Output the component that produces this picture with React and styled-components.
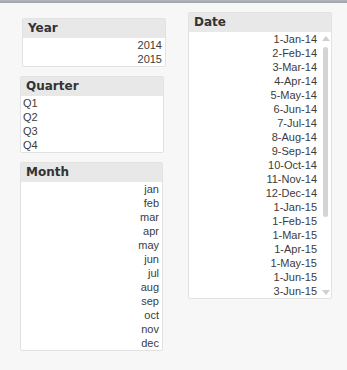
import styled, { createGlobalStyle } from "styled-components";

const GlobalStyle = createGlobalStyle`
  html, body {
    margin: 0;
    padding: 0;
    background: #f7f7f7;
  }
  body {
    font-family: "Liberation Sans", Arial, sans-serif;
  }
`

const TopBar = styled.div`
  height: 3px;
  background: linear-gradient(#b4b8bc, #9ea2a6);
`

const Page = styled.div`
  display: flex;
  align-items: flex-start;
  gap: 22px;
  padding-left: 20px;
`

const Column = styled.div`
  display: flex;
  flex-direction: column;
  gap: 9px;
  padding-top: ${p => p.$top}px;
  width: 146px;
`

const Box = styled.div`
  box-sizing: border-box;
  width: ${p => p.$width}px;
  margin-left: ${p => p.$offset || 0}px;
  background: #fff;
  border: 1px solid #e2e2e2;
  border-radius: 2px;
`

const Header = styled.div`
  height: 19px;
  line-height: 19px;
  padding-left: 5px;
  background: #e8e8e8;
  color: #333;
  font-family: "DejaVu Sans", Verdana, sans-serif;
  font-weight: 700;
  font-size: 12px;
`

const Body = styled.div`
  display: flex;
`

const List = styled.div`
  flex: 1;
  display: flex;
  flex-direction: column;
`

const Row = styled.div`
  height: 14px;
  line-height: 14px;
  font-size: 11px;
  color: #3c3c3c;
  text-align: ${p => p.$align};
  padding: 0 3px 0 2px;
  white-space: nowrap;
`

const ScrollBar = styled.div`
  width: 11px;
  display: flex;
  flex-direction: column;
  align-items: center;
  padding: 4px 0 3px;
`

const Arrow = styled.div`
  width: 0;
  height: 0;
  border-left: 4px solid transparent;
  border-right: 4px solid transparent;
  ${p => p.$up
    ? "border-bottom: 5px solid #cfcfcf;"
    : "border-top: 5px solid #cfcfcf;"}
`

const Track = styled.div`
  flex: 1;
  display: flex;
  flex-direction: column;
  align-items: center;
`

const Thumb = styled.div`
  width: 5px;
  height: 170px;
  margin-top: 6px;
  border-radius: 3px;
  background: #d4d4d4;
`

const years = ["2014", "2015"]
const quarters = ["Q1", "Q2", "Q3", "Q4"]
const months = ["jan", "feb", "mar", "apr", "may", "jun", "jul", "aug", "sep", "oct", "nov", "dec"]
const dates = [
  "1-Jan-14", "2-Feb-14", "3-Mar-14", "4-Apr-14", "5-May-14", "6-Jun-14",
  "7-Jul-14", "8-Aug-14", "9-Sep-14", "10-Oct-14", "11-Nov-14", "12-Dec-14",
  "1-Jan-15", "1-Feb-15", "1-Mar-15", "1-Apr-15", "1-May-15", "1-Jun-15", "3-Jun-15",
]

function ListBox({ title, items, align, width, offset, scroll }) {
  return (
    <Box $width={width} $offset={offset}>
      <Header>{title}</Header>
      <Body>
        <List>
          {items.map(item => <Row key={item} $align={align}>{item}</Row>)}
        </List>
        {scroll && (
          <ScrollBar>
            <Arrow $up />
            <Track><Thumb /></Track>
            <Arrow />
          </ScrollBar>
        )}
      </Body>
    </Box>
  )
}

export default function App() {
  return (
    <>
      <GlobalStyle />
      <TopBar />
      <Page>
        <Column $top={15}>
          <ListBox title="Year" items={years} align="right" width={144} offset={2} />
          <ListBox title="Quarter" items={quarters} align="left" width={144} />
          <ListBox title="Month" items={months} align="right" width={143} />
        </Column>
        <Column $top={9}>
          <ListBox title="Date" items={dates} align="right" width={144} scroll />
        </Column>
      </Page>
    </>
  )
}
